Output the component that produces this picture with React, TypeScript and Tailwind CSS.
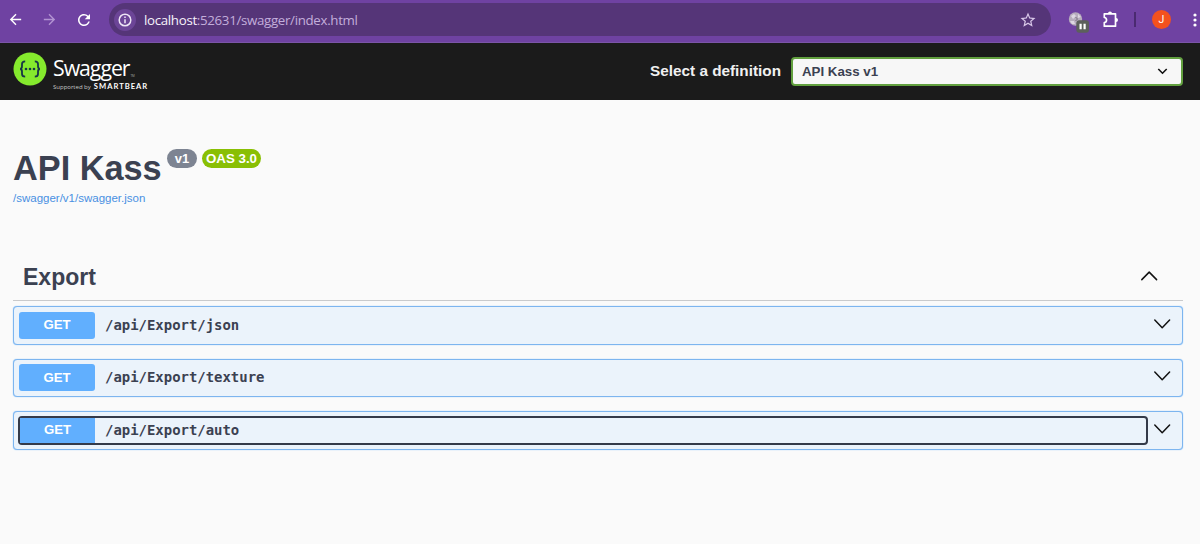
import { MdArrowBack, MdArrowForward, MdRefresh, MdStarBorder } from 'react-icons/md'

interface Operation {
  method: string
  path: string
  focused?: boolean
}

const operations: Operation[] = [
  { method: 'GET', path: '/api/Export/json' },
  { method: 'GET', path: '/api/Export/texture' },
  { method: 'GET', path: '/api/Export/auto', focused: true },
]

function Chevron({ up = false }: { up?: boolean }) {
  return (
    <svg width="18" height="10" viewBox="0 0 18 10" fill="none" stroke="#111" strokeWidth="1.5" strokeLinecap="round" strokeLinejoin="round">
      <path d={up ? 'M1.8 8.6 9.2 1.1l7.4 7.5' : 'M1.8 1.1 9.2 8.7l7.4-7.6'} />
    </svg>
  )
}

function BrowserBar() {
  return (
    <div className="flex h-[43px] items-start border-b border-[#7b55a8] bg-[#6f42a2] pt-[3px]">
      <div className="flex h-[33px] w-[109px] shrink-0 items-center pl-[7px] text-white">
        <MdArrowBack className="size-[17px]" />
        <MdArrowForward className="ml-[17px] size-[17px] text-[#b293d2]" />
        <MdRefresh className="ml-[17px] size-[18px]" />
      </div>
      <div className="flex h-[33px] w-[942px] shrink-0 items-center rounded-full bg-[#553578] pr-[14px] pl-[5px]">
        <div className="flex size-[22px] items-center justify-center rounded-full bg-[#6c4597]">
          <svg width="14" height="14" viewBox="0 0 14 14" fill="none" stroke="#eee5f6" strokeWidth="1.5">
            <circle cx="7" cy="7" r="5.8" />
            <path d="M7 6.2v4M7 3.6v1.5" />
          </svg>
        </div>
        <div className="ml-2 flex-1 font-['Open_Sans'] text-[13.3px] leading-5 tracking-[-0.32px] whitespace-nowrap text-[#c3aedb]">
          <span className="text-[#f7f2fb]">localhost</span>:52631/swagger/index.html
        </div>
        <MdStarBorder className="size-[18px] text-[#d9c8e9]" />
      </div>
      <div className="flex h-[33px] flex-1 items-center">
        <svg className="mt-[5px] ml-[17px] shrink-0" width="22" height="22" viewBox="0 0 22 22">
          <circle cx="7.5" cy="8" r="6.7" fill="#b7adbd" />
          <path d="M3 5l3-2 2 2-3 3zM10 3l3 3-3 1zM2 10l4 0 1 3-3 0z" fill="#ded7e2" />
          <path d="M7.5 6l2 2-2 2" stroke="#766d7d" fill="none" />
          <rect x="8.3" y="9.2" width="12.7" height="12.5" rx="3" fill="#5c605b" />
          <path d="M12.6 12.7v5.6M16.6 12.7v5.6" stroke="#fff" strokeWidth="2.2" />
        </svg>
        <svg className="mb-px ml-3 shrink-0" width="18" height="18" viewBox="0 0 18 18">
          <path
            d="M2.3 3.8h11.2v12.4H2.3v-3.6c3-.3 3-4.8 0-5.1z"
            fill="none"
            stroke="#fff"
            strokeWidth="1.7"
            strokeLinejoin="round"
          />
          <path d="M6 3.4a2 2 0 0 1 4 0zM14 8a2 2 0 0 1 0 4z" fill="#fff" />
        </svg>
        <div className="ml-[14px] h-[15px] w-[2px] shrink-0 bg-[#4a2a70]" />
        <div className="ml-4 flex size-[19px] shrink-0 items-center justify-center rounded-full bg-[#f4511e] font-['Roboto'] text-[10.5px] text-white">
          J
        </div>
        <svg className="ml-[22px] shrink-0" width="4" height="16" viewBox="0 0 4 16" fill="#fff">
          <circle cx="2" cy="3" r="1.6" />
          <circle cx="2" cy="8" r="1.6" />
          <circle cx="2" cy="13" r="1.6" />
        </svg>
      </div>
    </div>
  )
}

function SwaggerLogo() {
  return (
    <div className="flex h-10 items-start">
      <svg className="shrink-0" width="34" height="34" viewBox="0 0 34 34">
        <circle cx="17" cy="17" r="16.5" fill="#85ea2d" />
        <g fill="none" stroke="#173647" strokeWidth="1.8">
          <path d="M12.2 9.3c-2.3 0-3.2.8-3.2 2.6v2.4c0 1.8-.5 2.6-1.9 2.7 1.4.1 1.9.9 1.9 2.7v2.4c0 1.8.9 2.6 3.2 2.6" />
          <path d="M21.8 9.3c2.3 0 3.2.8 3.2 2.6v2.4c0 1.8.5 2.6 1.9 2.7-1.4.1-1.9.9-1.9 2.7v2.4c0 1.8-.9 2.6-3.2 2.6" />
        </g>
        <g fill="#173647">
          <circle cx="13" cy="17" r="1.3" />
          <circle cx="17" cy="17" r="1.3" />
          <circle cx="21" cy="17" r="1.3" />
        </g>
      </svg>
      <div className="ml-[6px] pt-[3px] font-['Open_Sans'] text-white">
        <div className="flex h-[27px] items-end leading-[28px]">
          <span className="text-[21.3px] font-normal tracking-[-1.05px]">Swagger</span>
          <span className="ml-px text-[3px] leading-[12px] text-[#aaa]">TM</span>
        </div>
        <div className="flex items-baseline gap-[3px] leading-[9px] whitespace-nowrap">
          <span className="text-[6px] text-[#c8c8c8]">Supported by</span>
          <span className="font-['Lato'] text-[7.6px] font-bold tracking-[1px]">SMARTBEAR</span>
        </div>
      </div>
    </div>
  )
}

function Topbar() {
  return (
    <div className="flex h-[57px] items-start justify-between bg-[#1b1b1b] pt-[9px] pr-[17px] pl-[13px]">
      <SwaggerLogo />
      <label className="flex items-center pt-[5px] font-bold">
        <span className="mr-[10px] text-[15.3px] whitespace-nowrap text-[#f0f0f0]">Select a definition</span>
        <div className="flex h-[29px] w-[392px] items-center justify-between rounded-[4px] border-2 border-[#62a03f] bg-[#f7f7f7] pr-[13px] pl-[9px] text-[13.3px] text-[#3b4151]">
          API Kass v1
          <svg width="11" height="7" viewBox="0 0 11 7" fill="none" stroke="#111" strokeWidth="1.6">
            <path d="M1.3 1l4.2 4.2L9.7 1" />
          </svg>
        </div>
      </label>
    </div>
  )
}

function OperationBlock({ method, path, focused }: Operation) {
  return (
    <div className="flex h-[38.5px] items-center rounded-[4px] border-[1.5px] border-[#7db5ef] bg-[#ebf3fb] pr-[11px] pl-[4px] shadow-[0_0_1px_#61affe]">
      <div
        className={`flex h-[29px] flex-1 items-center rounded-[4px] ${
          focused ? 'border-2 border-[#343a49]' : 'border-y-2 border-x border-transparent'
        }`}
      >
        <div
          className={`flex items-center justify-center bg-[#61affe] text-[13.2px] font-bold text-white ${
            focused ? 'h-[25px] w-[75px]' : 'h-[27px] w-[76px] rounded-[3px]'
          }`}
        >
          {method}
        </div>
        <span className="ml-[10px] font-['DejaVu_Sans_Mono'] text-[13.95px] font-bold text-[#3b4151]">{path}</span>
      </div>
      <div className="ml-[5px] pb-[3px]">
        <Chevron />
      </div>
    </div>
  )
}

export default function App() {
  return (
    <div className="h-[544px] w-[1200px] overflow-hidden bg-[#fafafa] font-['Liberation_Sans',sans-serif]">
      <BrowserBar />
      <Topbar />
      <main className="pr-[17px] pl-[13px]">
        <div className="flex h-[87px] items-start pt-[48px]">
          <h1 className="w-[149px] text-[34.3px] leading-10 font-bold whitespace-nowrap text-[#3b4151]">API Kass</h1>
          <span className="mt-px ml-[5px] flex h-[19px] w-[30px] items-center justify-center rounded-full bg-[#7d8492] text-[13px] font-bold text-white">
            v1
          </span>
          <span className="mt-px ml-[5px] flex h-[19px] w-[59px] items-center justify-center rounded-full bg-[#89bf04] text-[13.3px] font-bold whitespace-nowrap text-white">
            OAS 3.0
          </span>
        </div>
        <a className="block h-[65px] pt-[3px] text-[11.5px] leading-4 text-[#4990e2]">/swagger/v1/swagger.json</a>
        <div className="flex h-[49px] items-center justify-between border-b border-[#c9cacc] pr-[25px] pl-[10px]">
          <h2 className="pt-px text-[23px] leading-7 font-bold text-[#3b4151]">Export</h2>
          <Chevron up />
        </div>
        <div className="mt-[5px] flex flex-col gap-[14px]">
          {operations.map((op) => (
            <OperationBlock key={op.path} {...op} />
          ))}
        </div>
      </main>
    </div>
  )
}
